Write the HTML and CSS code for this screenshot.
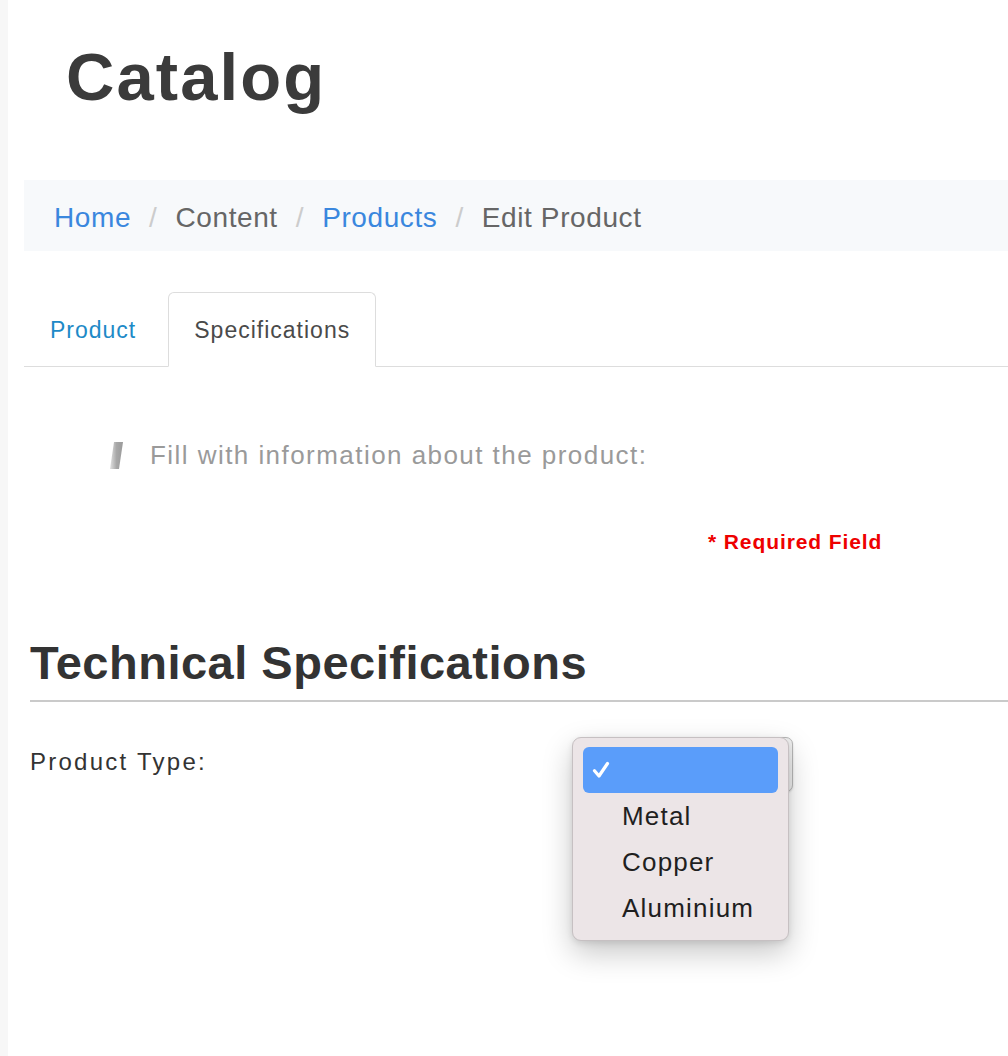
FILE: index.html
```html
<!DOCTYPE html>
<html lang="en">
<head>
<meta charset="utf-8">
<title>Catalog</title>
<link rel="stylesheet" href="styles.css">
</head>
<body>
<div class="page">
  <h1 class="title">Catalog</h1>

  <nav class="breadcrumb">
    <a class="crumb link" href="#">Home</a>
    <span class="sep">/</span>
    <span class="crumb">Content</span>
    <span class="sep">/</span>
    <a class="crumb link" href="#">Products</a>
    <span class="sep">/</span>
    <span class="crumb">Edit Product</span>
  </nav>

  <ul class="tabs">
    <li class="tab"><a href="#">Product</a></li>
    <li class="tab active"><a href="#">Specifications</a></li>
  </ul>

  <div class="info">
    <svg class="info-mark" width="14" height="28" viewBox="0 0 14 28">
      <defs>
        <linearGradient id="g" x1="0" y1="0" x2="1" y2="0">
          <stop offset="0" stop-color="#e2e2e2"/>
          <stop offset="0.5" stop-color="#a8a8a8"/>
          <stop offset="1" stop-color="#9a9a9a"/>
        </linearGradient>
      </defs>
      <polygon points="4,0 13,0 9,27 0,27" fill="url(#g)"/>
    </svg>
    <span class="info-text">Fill with information about the product:</span>
  </div>

  <div class="required">* Required Field</div>

  <section class="specs">
    <h2 class="specs-title">Technical Specifications</h2>
    <hr class="rule">
    <div class="field-row">
      <label class="field-label">Product Type:</label>
      <div class="select">
        <div class="popup">
          <div class="option selected">
            <svg class="check" width="19" height="18" viewBox="0 0 19 18"><path d="M2.5 9.8 L7 15 L15.5 2.5" fill="none" stroke="#fff" stroke-width="3.2" stroke-linecap="round" stroke-linejoin="round"/></svg>
          </div>
          <div class="option">Metal</div>
          <div class="option">Copper</div>
          <div class="option">Aluminium</div>
        </div>
      </div>
    </div>
  </section>
</div>
</body>
</html>
```

FILE: styles.css
```css
html, body {
  margin: 0;
  padding: 0;
}
body {
  background: #f7f7f7;
  font-family: "Liberation Sans", Arial, sans-serif;
}
.page {
  margin-left: 8px;
  min-height: 1056px;
  background: #ffffff;
  padding-left: 16px;
  padding-top: 37px;
  box-sizing: border-box;
  overflow: hidden;
}
.title {
  margin: 0 0 0 42px;
  font-size: 67px;
  line-height: 80px;
  font-weight: 700;
  letter-spacing: 2.1px;
  color: #3b3b3b;
}
.breadcrumb {
  margin-top: 63px;
  background: #f7f9fb;
  padding: 20px 0 16px 30px;
  display: flex;
  align-items: baseline;
  font-size: 28px;
  line-height: 35px;
  letter-spacing: 0.6px;
}
.crumb {
  color: #666666;
  text-decoration: none;
}
.crumb.link {
  color: #3a87de;
}
.sep {
  color: #cccccc;
  margin: 0 11px;
  padding: 0 7px;
}
.tabs {
  list-style: none;
  margin: 41px 0 0 0;
  padding: 0;
  display: flex;
  border-bottom: 1px solid #dddddd;
}
.tab {
  margin-bottom: -1px;
  margin-right: 6px;
  border: 1px solid transparent;
  border-radius: 6px 6px 0 0;
}
.tab a {
  display: block;
  padding: 22px 25px 21px 25px;
  font-size: 23px;
  line-height: 30px;
  letter-spacing: 1px;
  color: #1d8ac7;
  text-decoration: none;
}
.tab.active {
  border-color: #dddddd #dddddd #ffffff #dddddd;
  background: #ffffff;
}
.tab.active a {
  color: #4a4a4a;
}
.info {
  margin-top: 72px;
  padding-left: 86px;
  display: flex;
  align-items: center;
  gap: 26px;
}
.info-mark {
  display: block;
  flex: none;
  margin-top: 2px;
}
.info-text {
  font-size: 26px;
  line-height: 32px;
  letter-spacing: 1.45px;
  color: #9a9a9a;
}
.required {
  margin-top: 58px;
  padding-left: 684px;
  font-size: 21px;
  line-height: 26px;
  font-weight: 700;
  letter-spacing: 0.9px;
  color: #ee0000;
}
.specs {
  margin-top: 80px;
  margin-left: 6px;
}
.specs-title {
  margin: 0;
  font-size: 47px;
  line-height: 56px;
  font-weight: 700;
  letter-spacing: 0.5px;
  color: #333333;
}
.rule {
  margin: 9px 0 0 0;
  border: 0;
  height: 2px;
  background: #cacaca;
}
.field-row {
  margin-top: 35px;
  display: grid;
  grid-template-columns: 553px auto;
  align-items: start;
}
.field-label {
  padding-top: 11px;
  font-size: 24px;
  line-height: 28px;
  letter-spacing: 2.25px;
  color: #333333;
}
.select {
  position: relative;
  width: 210px;
  height: 55px;
  box-sizing: border-box;
  border: 1px solid #b9b9b9;
  border-radius: 7px;
  background: #f2f2f2;
  box-shadow: 0 1px 2px rgba(0, 0, 0, 0.15);
}
.popup {
  position: absolute;
  left: -12px;
  top: -1px;
  width: 217px;
  box-sizing: border-box;
  padding: 9px 10px 9px 10px;
  background: #ece5e7;
  border: 1px solid #c6c0c2;
  border-radius: 9px;
  box-shadow: 0 12px 30px rgba(0, 0, 0, 0.22), 0 2px 6px rgba(0, 0, 0, 0.1);
}
.option {
  height: 46px;
  padding-left: 39px;
  font-size: 26px;
  line-height: 46px;
  letter-spacing: 1.2px;
  color: #1f1f1f;
  position: relative;
}
.option.selected {
  background: #5a9dfa;
  border-radius: 6px;
}
.check {
  position: absolute;
  left: 9px;
  top: 14px;
}
```
